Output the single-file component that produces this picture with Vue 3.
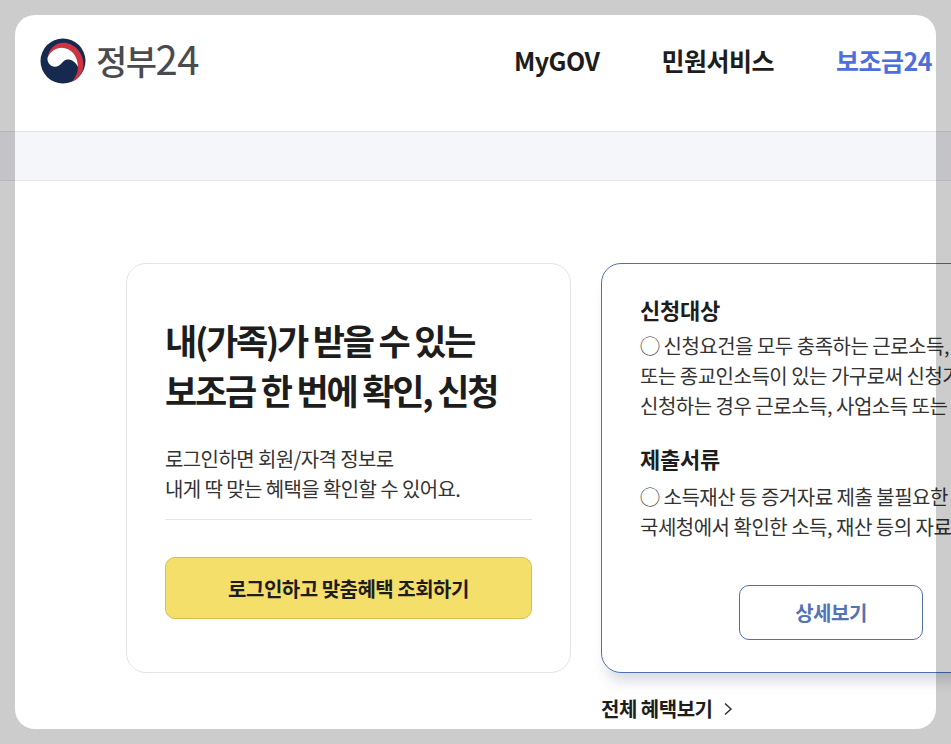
<script setup>
const nav = [
  { label: 'MyGOV' },
  { label: '민원서비스' },
  { label: '보조금24', active: true },
]
const sections = [
  {
    title: '신청대상',
    lines: [
      '◯ 신청요건을 모두 충족하는 근로소득, 사업소득',
      '또는 종교인소득이 있는 가구로써 신청가구',
      '신청하는 경우 근로소득, 사업소득 또는·종교인소득',
    ],
  },
  {
    title: '제출서류',
    lines: [
      '◯ 소득재산 등 증거자료 제출 불필요한 경우',
      '국세청에서 확인한 소득, 재산 등의 자료를 활용',
    ],
  },
]
</script>

<template>
  <div class="page">
    <header class="header">
      <div class="logo">
        <svg class="mark" viewBox="0 0 46 46" width="46" height="46" aria-hidden="true">
          <circle cx="23" cy="23" r="22.500" fill="#16294f" />
          <path d="M7.500 20C8.500 11 15.500 4.800 23.500 4.800 34 4.800 43.500 14.500 43.500 27 43.500 34 39 40.500 32 43.500 35.500 39.500 38 34.500 38 29 38 18 31 9.700 22 9.700 15 9.700 9.500 14 7.500 20Z" fill="#cf3340" />
          <path d="M7.500 20C9.500 14 15 9.700 22 9.700 31 9.700 38 18 38 29 35.500 23.500 31 21 27 21.500 22 22.500 21 28.700 15 28.700 10.500 28.700 7 24.500 7.500 20Z" fill="#fff" />
        </svg>
        <span class="wordmark">정부<span class="digits">24</span></span>
      </div>
      <nav class="nav">
        <a v-for="item in nav" :key="item.label" :class="{ active: item.active }">{{ item.label }}</a>
      </nav>
    </header>

    <div class="band"></div>

    <main class="main">
      <section class="login-card">
        <h1>내(가족)가 받을 수 있는<br />보조금 한 번에 확인, 신청</h1>
        <p class="desc">로그인하면 회원/자격 정보로<br />내게 딱 맞는 혜택을 확인할 수 있어요.</p>
        <button class="login-btn" type="button">로그인하고 맞춤혜택 조회하기</button>
      </section>

      <div class="right-col">
        <section class="info-card">
          <div class="info-body">
            <div v-for="s in sections" :key="s.title" class="info-block">
              <h2>{{ s.title }}</h2>
              <p v-for="line in s.lines" :key="line">{{ line }}</p>
            </div>
          </div>
          <button class="detail-btn" type="button">상세보기</button>
        </section>
        <a class="all-link">
          전체 혜택보기
          <svg viewBox="0 0 10 14" width="10" height="14" aria-hidden="true">
            <path d="M2 1.500 8 7l-6 5.500" fill="none" stroke="#333" stroke-width="1.500" />
          </svg>
        </a>
      </div>
    </main>

    <div class="dim-frame"></div>
  </div>
</template>

<style scoped>
.page {
  position: relative;
  width: 951px;
  height: 744px;
  overflow: hidden;
  background: #fff;
  color: #1d1d1d;
  font-family: "Noto Sans CJK KR", "Noto Sans", sans-serif;
}
.header {
  display: flex;
  align-items: flex-start;
  justify-content: space-between;
  height: 131px;
  box-sizing: border-box;
  padding: 38px 19px 0 40px;
}
.logo {
  display: flex;
  align-items: flex-start;
  gap: 10px;
}
.mark { display: block; }
.wordmark {
  font-size: 34px;
  font-weight: 500;
  letter-spacing: -1.500px;
  color: #4a4b4d;
  line-height: 40px;
}
.digits {
  font-size: 40px;
  font-weight: 400;
  letter-spacing: -0.500px;
}
.nav {
  display: flex;
  gap: 62px;
  margin-top: 4px;
  font-size: 25px;
  font-weight: 700;
  letter-spacing: -0.500px;
  line-height: 36px;
}
.nav .active { color: #4d6fdc; }
.band {
  height: 48px;
  background: #f5f6fa;
  border-top: 1px solid #e2e3e6;
  border-bottom: 1px solid #e6e7ea;
}
.main {
  display: flex;
  gap: 30px;
  padding: 82px 0 0 126px;
}
.login-card {
  flex: none;
  width: 445px;
  height: 410px;
  box-sizing: border-box;
  padding: 51px 38px 0 38px;
  border: 1px solid #e3e4ea;
  border-radius: 20px;
}
h1 {
  margin: 0;
  font-size: 35px;
  font-weight: 700;
  line-height: 50px;
  letter-spacing: -2.200px;
}
.desc {
  margin: 29px 0 0;
  padding-bottom: 15px;
  border-bottom: 1px solid #e3e4ea;
  font-size: 20px;
  line-height: 30px;
  letter-spacing: -0.600px;
  color: #333;
}
.login-btn {
  display: block;
  width: 100%;
  height: 62px;
  margin-top: 37px;
  border: 1px solid #d9bf4f;
  border-radius: 10px;
  background: #f5df6b;
  color: #1d1d1d;
  font: 700 20px "Noto Sans CJK KR", sans-serif;
  letter-spacing: -0.500px;
}
.right-col {
  flex: none;
  width: 400px;
}
.info-card {
  box-sizing: border-box;
  height: 410px;
  padding: 29px 0 0 38px;
  border: 1px solid #4f6fb5;
  border-radius: 20px;
  background: #fff;
  box-shadow: 0 14px 14px -6px rgba(60, 70, 110, 0.2);
}
.info-body {
  height: 292px;
}
.info-block + .info-block { margin-top: 21px; }
.info-block + .info-block h2 { margin-bottom: 8px; }
h2 {
  margin: 0 0 6px;
  font-size: 22px;
  font-weight: 700;
  line-height: 32px;
  letter-spacing: -0.200px;
}
.info-block p {
  margin: 0;
  font-size: 20px;
  line-height: 30px;
  letter-spacing: -0.500px;
  color: #333;
  white-space: nowrap;
}
.detail-btn {
  display: block;
  width: 184px;
  height: 55px;
  margin-left: 99px;
  border: 1px solid #4f6fb5;
  border-radius: 10px;
  background: #fff;
  color: #5472b6;
  font: 700 20px "Noto Sans CJK KR", sans-serif;
  letter-spacing: -0.500px;
}
.all-link {
  display: flex;
  align-items: center;
  gap: 11px;
  margin-top: 22px;
  font-size: 20px;
  font-weight: 700;
  line-height: 28px;
  letter-spacing: -0.500px;
}
.dim-frame {
  position: absolute;
  inset: 15px;
  border-radius: 20px;
  box-shadow: 0 0 0 60px rgba(0, 0, 0, 0.2);
  pointer-events: none;
}
</style>
